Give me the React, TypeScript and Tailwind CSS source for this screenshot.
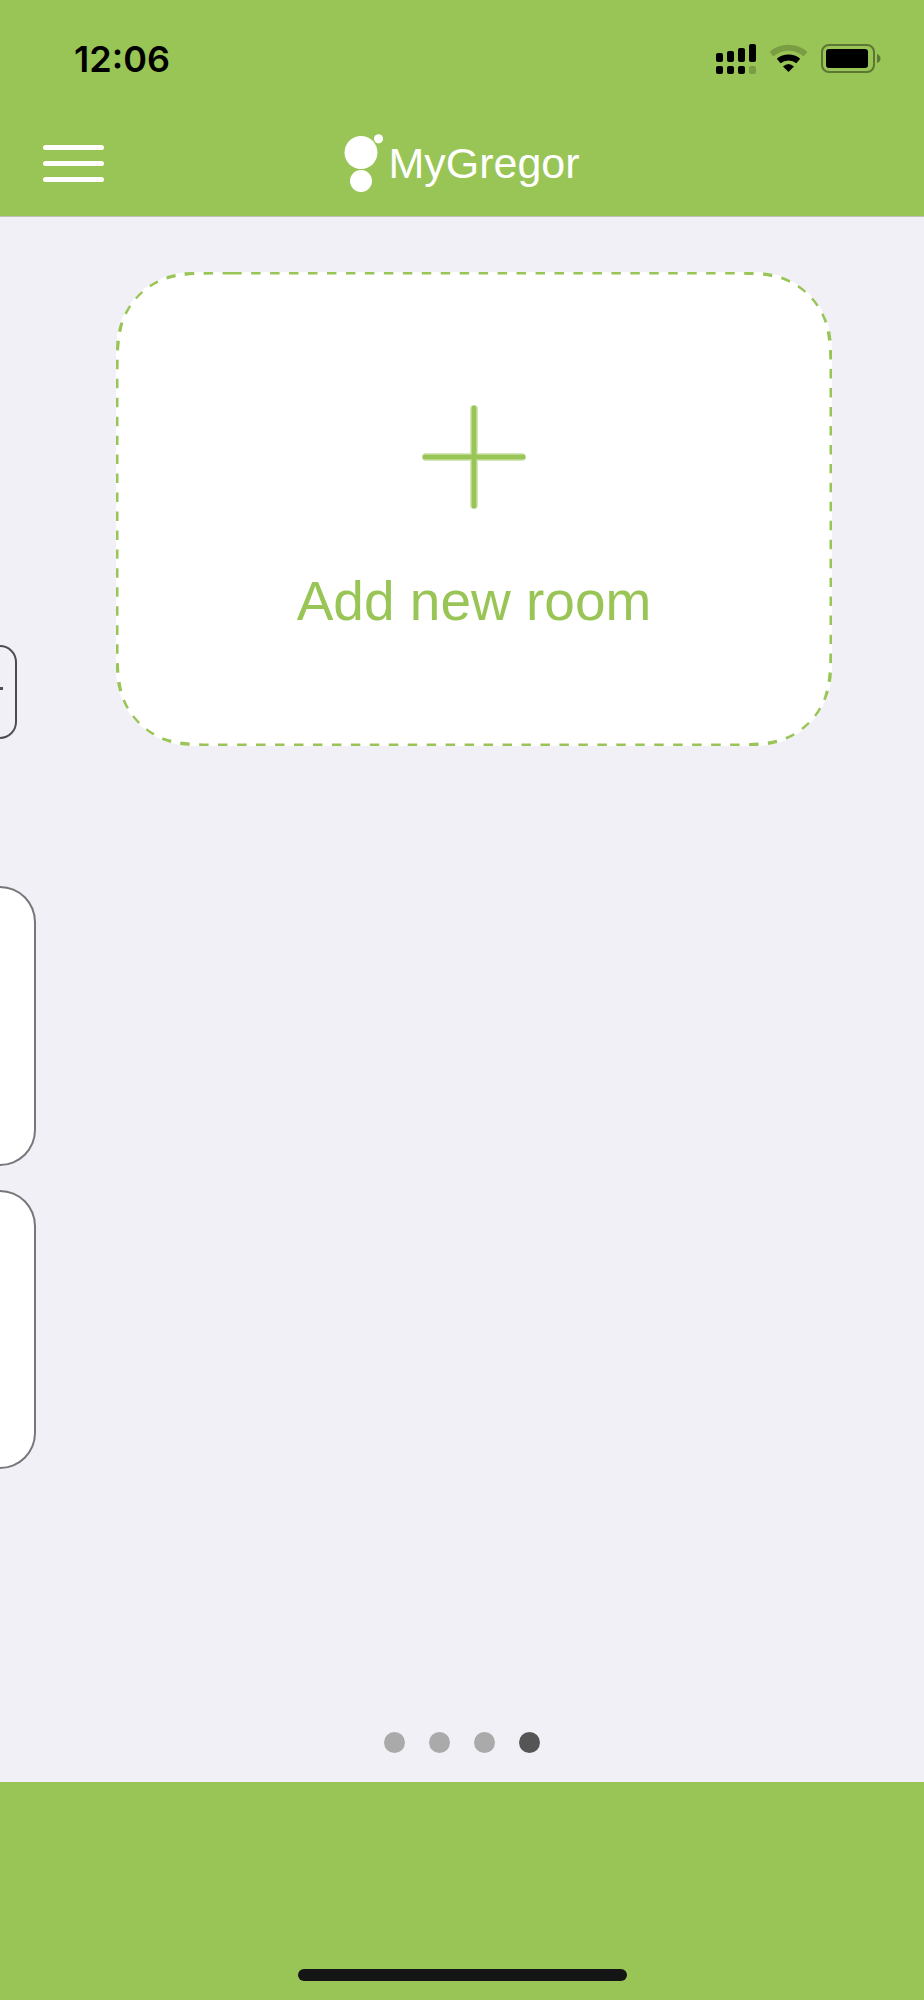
const CARD_W = 716;
const CARD_H = 474;

// Rounded rectangle with iOS-style continuous corners
function smoothRect(w: number, h: number, r: number) {
  const a = 1.528665 * r;
  const b = 1.088493 * r;
  const c = 0.868407 * r;
  const d = 0.631494 * r;
  const e = 0.372824 * r;
  const f = 0.16906 * r;
  const g = 0.074911 * r;
  return [
    `M${a} 0`,
    `L${w - a} 0`,
    `C${w - b} 0 ${w - c} 0 ${w - d} ${g}`,
    `C${w - e} ${f} ${w - f} ${e} ${w - g} ${d}`,
    `C${w} ${c} ${w} ${b} ${w} ${a}`,
    `L${w} ${h - a}`,
    `C${w} ${h - b} ${w} ${h - c} ${w - g} ${h - d}`,
    `C${w - f} ${h - e} ${w - e} ${h - f} ${w - d} ${h - g}`,
    `C${w - c} ${h} ${w - b} ${h} ${w - a} ${h}`,
    `L${a} ${h}`,
    `C${b} ${h} ${c} ${h} ${d} ${h - g}`,
    `C${e} ${h - f} ${f} ${h - e} ${g} ${h - d}`,
    `C0 ${h - c} 0 ${h - b} 0 ${h - a}`,
    `L0 ${a}`,
    `C0 ${b} 0 ${c} ${g} ${d}`,
    `C${f} ${e} ${e} ${f} ${d} ${g}`,
    `C${c} 0 ${b} 0 ${a} 0Z`,
  ].join(" ");
}

const slides = [
  { label: "Room 1", active: false },
  { label: "Room 2", active: false },
  { label: "Room 3", active: false },
  { label: "Add room", active: true },
];

function StatusIcons() {
  return (
    <svg width="166" height="30" viewBox="0 0 166 30" aria-hidden="true">
      {/* Signal */}
      <rect x="0" y="9" width="7" height="9" rx="2" />
      <rect x="11" y="7" width="7" height="11" rx="2" />
      <rect x="22" y="4" width="7" height="14" rx="2" />
      <rect x="33" y="0" width="7" height="18" rx="2" />
      <rect x="0" y="22" width="7" height="8" rx="2" />
      <rect x="11" y="22" width="7" height="8" rx="2" />
      <rect x="22" y="22" width="7" height="8" rx="2" />
      <rect x="33" y="22" width="7" height="8" rx="2" opacity="0.2" />
      {/* Wi-Fi */}
      <path d="M55.5 10.2A26 26 0 0 1 89.5 10.2" fill="none" stroke="#000" strokeOpacity="0.2" strokeWidth="6" />
      <path d="M62.7 17A15.5 15.5 0 0 1 82.3 17" fill="none" stroke="#000" strokeWidth="6" />
      <path d="M67 22.5Q72.5 17.5 78 22.5L72.5 28Z" />
      {/* Battery */}
      <rect x="106" y="1" width="52" height="27" rx="7" fill="none" stroke="#000" strokeOpacity="0.4" strokeWidth="2" />
      <rect x="110" y="5" width="42" height="19" rx="3" />
      <path d="M161 10Q164.500 11.500 164.500 14.500Q164.500 17.500 161 19Z" opacity="0.4" />
    </svg>
  );
}

function Logo() {
  return (
    <a href="#" className="flex items-center gap-1 text-white">
      <svg width="40" height="58" viewBox="0 0 40 58" fill="currentColor" aria-hidden="true">
        <circle cx="17" cy="18.500" r="16.500" />
        <circle cx="17" cy="47" r="11" />
        <circle cx="34.500" cy="4.800" r="4.600" />
      </svg>
      <span className="font-['Liberation_Sans',sans-serif] text-[43px] leading-[58px]">MyGregor</span>
    </a>
  );
}

function Header() {
  return (
    <header className="border-b border-[#bfc2b8] bg-[#99c556] pb-2">
      <div className="flex h-[118px] items-center justify-between pl-[74px] pr-[42px]">
        <span className="text-4xl font-semibold text-black">12:06</span>
        <StatusIcons />
      </div>
      <nav className="grid h-[90px] grid-cols-[1fr_auto_1fr] items-center px-[43px]">
        <button className="flex w-[61px] flex-col gap-[11px]" aria-label="Open menu">
          <span className="h-[5px] w-full rounded-full bg-white" />
          <span className="h-[5px] w-full rounded-full bg-white" />
          <span className="h-[5px] w-full rounded-full bg-white" />
        </button>
        <Logo />
      </nav>
    </header>
  );
}

// Right edge of the previous slide, still visible on the left
function PreviousRoom() {
  return (
    <div className="flex w-9 shrink-0 flex-col pt-[428px]" aria-hidden="true">
      <div className="flex h-[94px] w-[17px] items-center rounded-r-[20px] border-2 border-l-0 border-[#4c4d50]">
        <span className="-mt-2 h-[3px] w-[3px] bg-[#4c4d50]" />
      </div>
      <div className="mt-[147px] h-[280px] rounded-r-[36px] border-2 border-l-0 border-[#77777b] bg-white" />
      <div className="mt-6 h-[279px] rounded-r-[36px] border-2 border-l-0 border-[#77777b] bg-white" />
    </div>
  );
}

function AddRoomCard() {
  return (
    <button className="relative flex aspect-[716/474] w-full flex-col items-center gap-[62px] overflow-hidden rounded-[76px] bg-white pt-[133px] text-[#99c556]">
      <svg
        className="absolute inset-0 h-full w-full"
        viewBox={`0 0 ${CARD_W} ${CARD_H}`}
        fill="none"
        aria-hidden="true"
      >
        {/* odd length, so the last dash runs into the first */}
        <path
          d={smoothRect(CARD_W, CARD_H, 76)}
          pathLength="237"
          stroke="currentColor"
          strokeWidth="5"
          strokeDasharray="1 1"
        />
      </svg>
      <svg width="104" height="104" viewBox="0 0 104 104" stroke="currentColor" strokeLinecap="round" aria-hidden="true">
        <path d="M4 52H100M52 4V100" strokeWidth="8" opacity="0.4" />
        <path d="M3 52H101M52 3V101" strokeWidth="5" />
      </svg>
      <span className="font-['Liberation_Sans',sans-serif] text-[55px] leading-[60px]">Add new room</span>
    </button>
  );
}

export default function App() {
  return (
    <div className="flex min-h-screen flex-col bg-[#f1f0f6] font-['Inter',sans-serif]">
      <Header />

      <main className="flex flex-1 flex-col">
        <div className="flex flex-1">
          <PreviousRoom />
          <section className="flex-1 pt-[55px] pr-[92px] pl-20">
            <AddRoomCard />
          </section>
        </div>

        {/* Page dots */}
        <div className="flex justify-center gap-6 pb-[29px]">
          {slides.map(({ label, active }) => (
            <button
              key={label}
              aria-label={label}
              className={["h-[21px] w-[21px] rounded-full", active ? "bg-[#555555]" : "bg-[#aaaaaa]"].join(" ")}
            />
          ))}
        </div>
      </main>

      <footer className="flex h-[218px] items-end justify-center bg-[#99c556] pb-[19px]">
        <div className="h-3 w-[329px] rounded-full bg-[#151515]" />
      </footer>
    </div>
  );
}
